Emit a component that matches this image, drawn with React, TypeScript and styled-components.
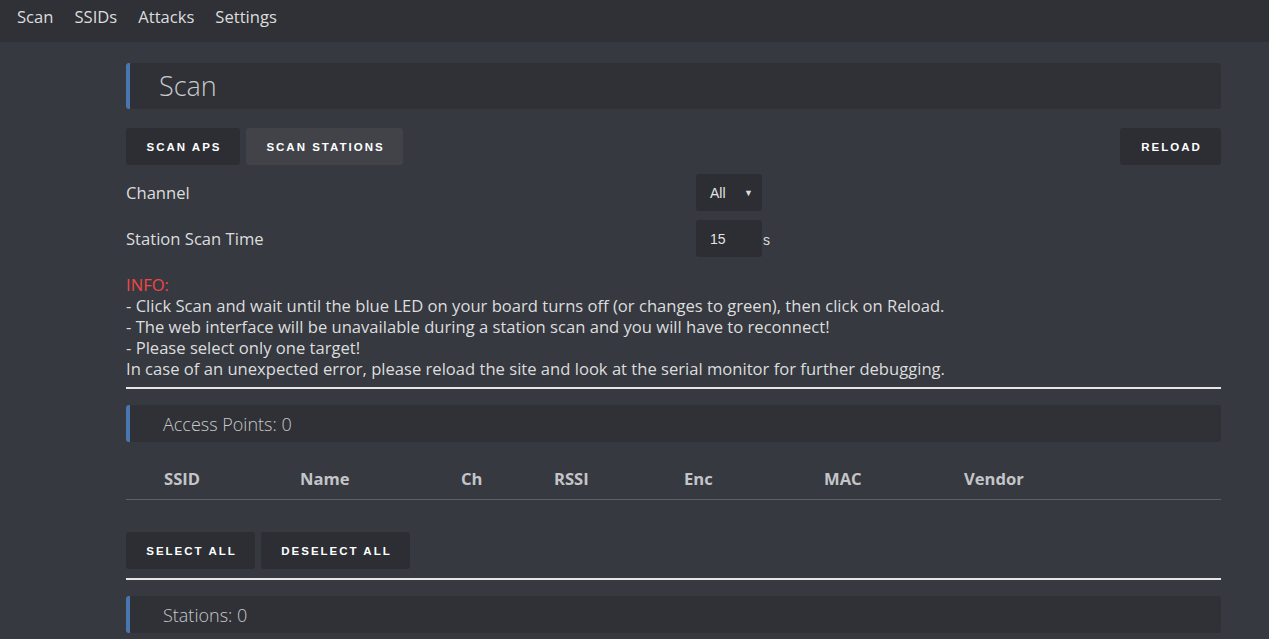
import React from "react";
import styled, { createGlobalStyle } from "styled-components";

const Global = createGlobalStyle`
  html, body { margin: 0; padding: 0; background: #36393f; }
  body { font-family: "Open Sans", "Noto Sans", sans-serif; color: #dcddde; }
  * { box-sizing: border-box; }
`;

const Nav = styled.nav`
  height: 42px;
  background: #2f3136;
  display: flex;
  align-items: center;
  gap: 21px;
  padding: 0 0 9px 17px;
  font-size: 16.6px;
  color: #dcddde;
`;

const NavLink = styled.a`
  color: #dcddde;
  text-decoration: none;
`;

const Main = styled.main`
  width: 1095px;
  margin-left: 126px;
  padding-top: 21px;
  display: flex;
  flex-direction: column;
`;

const TitleBar = styled.div<{ $big?: boolean }>`
  background: #2f3136;
  border-left: 4px solid #4a76b0;
  border-radius: 3px;
  height: ${(p) => (p.$big ? "46px" : "37px")};
  display: flex;
  align-items: center;
  padding-left: ${(p) => (p.$big ? "29px" : "33px")};
  padding-bottom: ${(p) => (p.$big ? "2px" : "0")};
  font-size: ${(p) => (p.$big ? "27px" : "18px")};
  font-weight: 300;
  color: #c8c9cb;
`;

const ButtonRow = styled.div<{ $mt: number }>`
  display: flex;
  gap: 6px;
  margin-top: ${(p) => p.$mt}px;
`;

const Spacer = styled.div`
  flex: 1;
`;

const Button = styled.button<{ $active?: boolean; $w: number }>`
  height: 37px;
  width: ${(p) => p.$w}px;
  border: none;
  border-radius: 3px;
  background: ${(p) => (p.$active ? "#414349" : "#2c2e33")};
  color: #ffffff;
  font-family: "Liberation Sans", Arial, sans-serif;
  font-weight: 700;
  font-size: 11.5px;
  letter-spacing: 2px;
  padding: 0 0 0 2px;
  cursor: pointer;
`;

const FormRow = styled.div<{ $mt: number }>`
  display: flex;
  align-items: center;
  height: 37px;
  margin-top: ${(p) => p.$mt}px;
  font-size: 16.6px;
  color: #dcddde;
`;

const Label = styled.div`
  width: 570px;
`;

const Field = styled.div`
  width: 66px;
  height: 37px;
  background: #2c2e33;
  border-radius: 3px;
  display: flex;
  align-items: center;
  justify-content: space-between;
  padding: 0 9px 0 14px;
  font-family: "Liberation Sans", Arial, sans-serif;
  font-size: 14px;
  color: #e4e4e4;
`;

const Caret = styled.span`
  font-size: 9px;
  color: #dcddde;
`;

const Unit = styled.span`
  margin-left: 1px;
  font-family: "Liberation Sans", Arial, sans-serif;
  font-size: 14px;
  color: #dcddde;
  padding-top: 2px;
`;

const Info = styled.div`
  margin-top: 17px;
  font-size: 16.6px;
  line-height: 21px;
  color: #dcddde;
`;

const InfoHead = styled.div`
  color: #f04747;
`;

const Rule = styled.hr<{ $mt: number; $mb: number }>`
  border: none;
  height: 2px;
  background: #e6e6e6;
  margin: ${(p) => p.$mt}px 0 ${(p) => p.$mb}px 0;
  width: 100%;
`;

const Table = styled.table`
  margin-top: 25px;
  width: 100%;
  border-collapse: collapse;
`;

const Th = styled.th<{ $w: number }>`
  width: ${(p) => p.$w}px;
  text-align: left;
  font-weight: 700;
  font-size: 16.6px;
  color: #c4c5c8;
  padding: 0 0 9px 0;
  border-bottom: 1px solid #5e6066;
`;

const cols: [string, number][] = [
  ["", 38],
  ["SSID", 136],
  ["Name", 161],
  ["Ch", 93],
  ["RSSI", 130],
  ["Enc", 140],
  ["MAC", 140],
  ["Vendor", 257],
];

export default function App() {
  return (
    <>
      <Global />
      <Nav>
        <NavLink>Scan</NavLink>
        <NavLink>SSIDs</NavLink>
        <NavLink>Attacks</NavLink>
        <NavLink>Settings</NavLink>
      </Nav>
      <Main>
        <TitleBar $big>Scan</TitleBar>
        <ButtonRow $mt={19}>
          <Button $w={114}>SCAN APS</Button>
          <Button $w={157} $active>SCAN STATIONS</Button>
          <Spacer />
          <Button $w={101}>RELOAD</Button>
        </ButtonRow>
        <FormRow $mt={9}>
          <Label>Channel</Label>
          <Field>
            All <Caret>▼</Caret>
          </Field>
        </FormRow>
        <FormRow $mt={9}>
          <Label>Station Scan Time</Label>
          <Field>15</Field>
          <Unit>s</Unit>
        </FormRow>
        <Info>
          <InfoHead>INFO:</InfoHead>
          <div>- Click Scan and wait until the blue LED on your board turns off (or changes to green), then click on Reload.</div>
          <div>- The web interface will be unavailable during a station scan and you will have to reconnect!</div>
          <div>- Please select only one target!</div>
          <div>In case of an unexpected error, please reload the site and look at the serial monitor for further debugging.</div>
        </Info>
        <Rule $mt={8} $mb={16} />
        <TitleBar>Access Points: 0</TitleBar>
        <Table>
          <thead>
            <tr>
              {cols.map(([c, w], i) => (
                <Th key={i} $w={w}>{c}</Th>
              ))}
            </tr>
          </thead>
        </Table>
        <ButtonRow $mt={32}>
          <Button $w={129}>SELECT ALL</Button>
          <Button $w={149}>DESELECT ALL</Button>
        </ButtonRow>
        <Rule $mt={9} $mb={16} />
        <TitleBar>Stations: 0</TitleBar>
      </Main>
    </>
  );
}
